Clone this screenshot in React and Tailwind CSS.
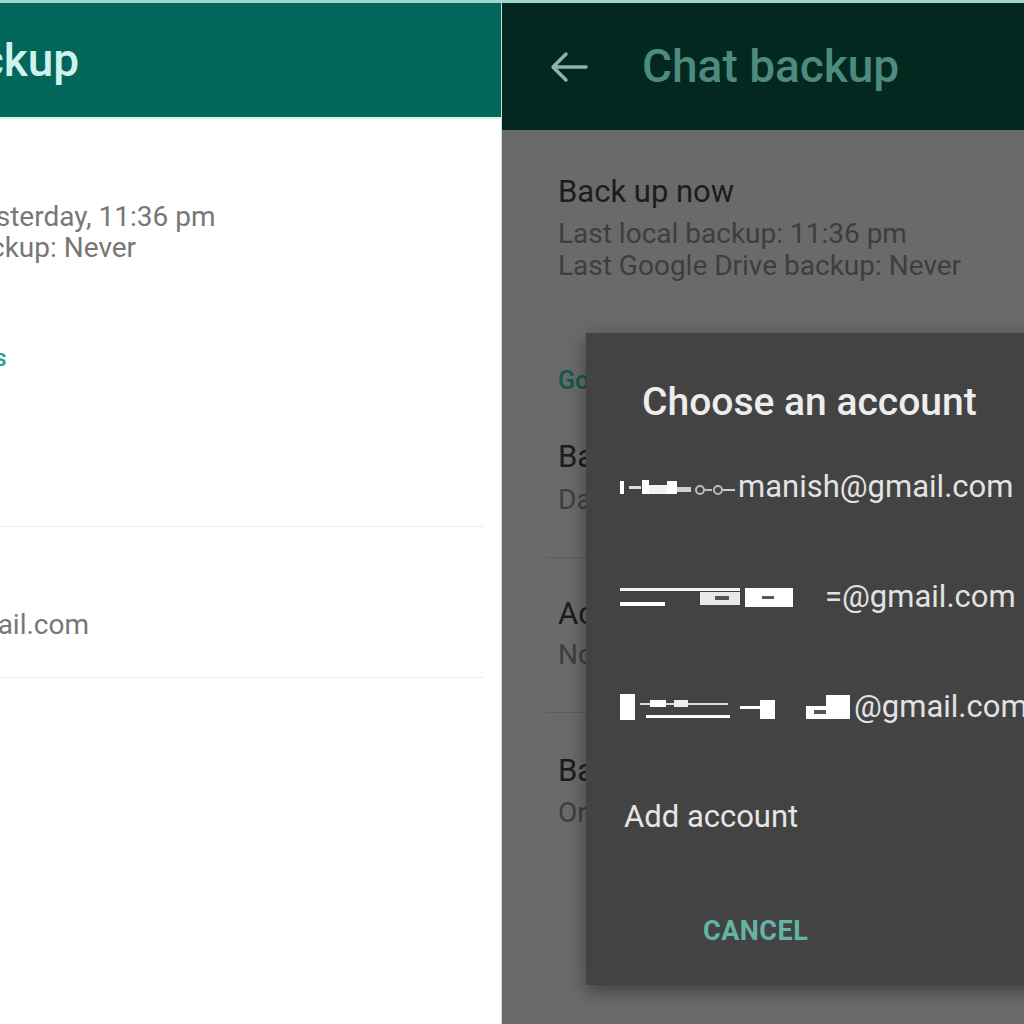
import React from "react";

const LeftPanel = () => {
	return (
		<div className="w-[501px] shrink-0 flex flex-col overflow-hidden bg-white">
			{/* header, title runs off the left edge */}
			<div className="h-[114px] shrink-0 bg-[#03665a] flex items-center overflow-hidden">
				<span className="-ml-[178px] whitespace-nowrap text-[46px] font-medium text-[#cdf3ec]">
					Chat backup
				</span>
			</div>
			<div className="h-[2px] bg-[#d6f3ee]" />

			<div className="-ml-[267px] flex flex-col whitespace-nowrap">
				<div className="mt-[46px] text-[31px] leading-[36px] text-[#222]">Back up now</div>
				<div className="text-[28px] leading-[31px] text-[#777]">
					Last local backup: Yesterday, 11:36 pm
				</div>
				<div className="text-[28px] leading-[31px] text-[#777]">
					Last Google Drive backup: Never
				</div>

				<div className="mt-[80px] ml-[44px] text-[24px] leading-[30px] font-medium text-[#2f9d8a]">
					Google Drive settings
				</div>

				<div className="mt-[52px] text-[25px] leading-[34px] text-[#9a9a9a]">Back up to Google Drive</div>
				<div className="text-[22px] leading-[30px] text-[#9a9a9a]">Never</div>

				<div className="mt-[37px] w-[750px] h-[1px] bg-[#ececec]" />

				<div className="mt-[46px] text-[31px] leading-[36px] text-[#222]">Account</div>
				<div className="ml-[4px] text-[28px] leading-[31px] text-[#777]">
					kashyapmanish@gmail.com
				</div>

				<div className="mt-[37px] w-[750px] h-[1px] bg-[#ececec]" />

				<div className="mt-[62px] text-[25px] leading-[34px] text-[#9a9a9a]">Back up over cellular</div>
				<div className="text-[22px] leading-[30px] text-[#9a9a9a]">Wi-Fi</div>
			</div>
		</div>
	);
};

const BackArrow = () => (
	<svg width="40" height="36" viewBox="0 0 40 36" fill="none">
		<path
			d="M38 18H5M18 5L5 18l13 13"
			stroke="#8fb3ac"
			strokeWidth="3.5"
			strokeLinecap="round"
			strokeLinejoin="round"
		/>
	</svg>
);

const Dialog = () => {
	return (
		<div className="absolute top-[330px] left-[84px] w-[470px] h-[652px] bg-[#434343] shadow-[0_6px_18px_rgba(0,0,0,0.4)] flex flex-col whitespace-nowrap">
			<div className="pt-[46px] pl-[56px] text-[39px] leading-[46px] font-medium text-[#ededed]">
				Choose an account
			</div>

			<div className="mt-[7px] flex flex-col pl-[34px] text-[31px] text-[#e2e2e2]">
				<div className="h-[110px] flex items-center">
					<svg width="118" height="20" viewBox="0 0 118 20" className="shrink-0">
						<rect x="0" y="4" width="4" height="13" fill="#fff" />
						<rect x="9" y="9" width="12" height="3" fill="#ddd" />
						<rect x="22" y="3" width="7" height="14" fill="#fff" />
						<rect x="29" y="8" width="18" height="9" fill="#f2f2f2" />
						<rect x="47" y="4" width="10" height="13" fill="#fff" />
						<rect x="57" y="10" width="14" height="5" fill="#cfcfcf" />
						<circle cx="80" cy="13" r="4" stroke="#bbb" strokeWidth="2" fill="none" />
						<rect x="85" y="12" width="7" height="2" fill="#bbb" />
						<circle cx="98" cy="13" r="4" stroke="#bbb" strokeWidth="2" fill="none" />
						<rect x="103" y="12" width="12" height="2" fill="#ccc" />
					</svg>
					<span>manish@gmail.com</span>
				</div>

				<div className="h-[110px] flex items-center">
					<svg width="205" height="24" viewBox="0 0 205 24" className="shrink-0">
						<rect x="0" y="3" width="120" height="3" fill="#f4f4f4" />
						<rect x="0" y="17" width="45" height="4" fill="#fff" />
						<rect x="80" y="7" width="40" height="13" fill="#e8e8e8" />
						<rect x="95" y="11" width="14" height="4" fill="#555" />
						<rect x="125" y="3" width="48" height="19" fill="#fff" />
						<rect x="142" y="11" width="12" height="3" fill="#555" />
					</svg>
					<span>=@gmail.com</span>
				</div>

				<div className="h-[110px] flex items-center">
					<svg width="234" height="28" viewBox="0 0 234 28" className="shrink-0">
						<rect x="0" y="1" width="15" height="26" fill="#fff" />
						<rect x="20" y="10" width="88" height="2" fill="#ddd" />
						<rect x="30" y="7" width="16" height="7" fill="#fff" />
						<rect x="54" y="7" width="14" height="7" fill="#eee" />
						<rect x="26" y="22" width="84" height="3" fill="#fff" />
						<rect x="120" y="13" width="22" height="3" fill="#fff" />
						<rect x="140" y="7" width="15" height="19" fill="#fff" />
						<rect x="186" y="13" width="26" height="13" fill="#fff" />
						<rect x="206" y="2" width="24" height="24" fill="#fff" />
						<rect x="194" y="17" width="12" height="4" fill="#555" />
					</svg>
					<span>@gmail.com</span>
				</div>

				<div className="h-[110px] flex items-center pl-[4px] text-[#e6e6e6]">Add account</div>
			</div>

			<div className="mt-[44px] pl-[117px] text-[27px] leading-[30px] font-bold tracking-[0.5px] text-[#62b5a5]">
				CANCEL
			</div>
		</div>
	);
};

const RightPanel = () => {
	return (
		<div className="relative flex-1 flex flex-col overflow-hidden bg-[#6a6a6a]">
			<div className="h-[127px] shrink-0 bg-[#02281f] flex items-center">
				<div className="ml-[46px] w-[40px] flex items-center">
					<BackArrow />
				</div>
				<span className="ml-[54px] whitespace-nowrap text-[46px] font-medium text-[#4e8b7f]">
					Chat backup
				</span>
			</div>

			<div className="pl-[56px] flex flex-col whitespace-nowrap">
				<div className="mt-[43px] text-[31px] leading-[38px] text-[#1c1c1c]">Back up now</div>
				<div className="mt-[7px] text-[28px] leading-[32px] text-[#3e3e3e]">
					Last local backup: 11:36 pm
				</div>
				<div className="text-[28px] leading-[32px] text-[#3e3e3e]">
					Last Google Drive backup: Never
				</div>

				<div className="mt-[84px] text-[25px] leading-[30px] font-medium text-[#0e5a4c]">
					Google Drive settings
				</div>

				<div className="mt-[42px] text-[31px] leading-[38px] text-[#1c1c1c]">Back up to Google Drive</div>
				<div className="mt-[8px] text-[28px] leading-[32px] text-[#3e3e3e]">Daily</div>

				<div className="mt-[41px] -ml-[12px] h-[1px] bg-[#5c5c5c]" />

				<div className="mt-[37px] text-[31px] leading-[38px] text-[#1c1c1c]">Account</div>
				<div className="mt-[6px] text-[28px] leading-[32px] text-[#3e3e3e]">None selected</div>

				<div className="mt-[41px] -ml-[12px] h-[1px] bg-[#5c5c5c]" />

				<div className="mt-[39px] text-[31px] leading-[38px] text-[#1c1c1c]">Back up over</div>
				<div className="mt-[7px] text-[28px] leading-[32px] text-[#3e3e3e]">Only Wi-Fi</div>
			</div>

			<Dialog />
		</div>
	);
};

export default function App() {
	return (
		<div className="w-[1024px] h-[1024px] overflow-hidden flex flex-col bg-white font-['Roboto',sans-serif]">
			<div className="h-[3px] shrink-0 bg-[#a3d6cd]" />
			<div className="flex flex-1 min-h-0">
				<LeftPanel />
				<div className="w-[1px] shrink-0 bg-[#d8d8d8]" />
				<RightPanel />
			</div>
		</div>
	);
}
